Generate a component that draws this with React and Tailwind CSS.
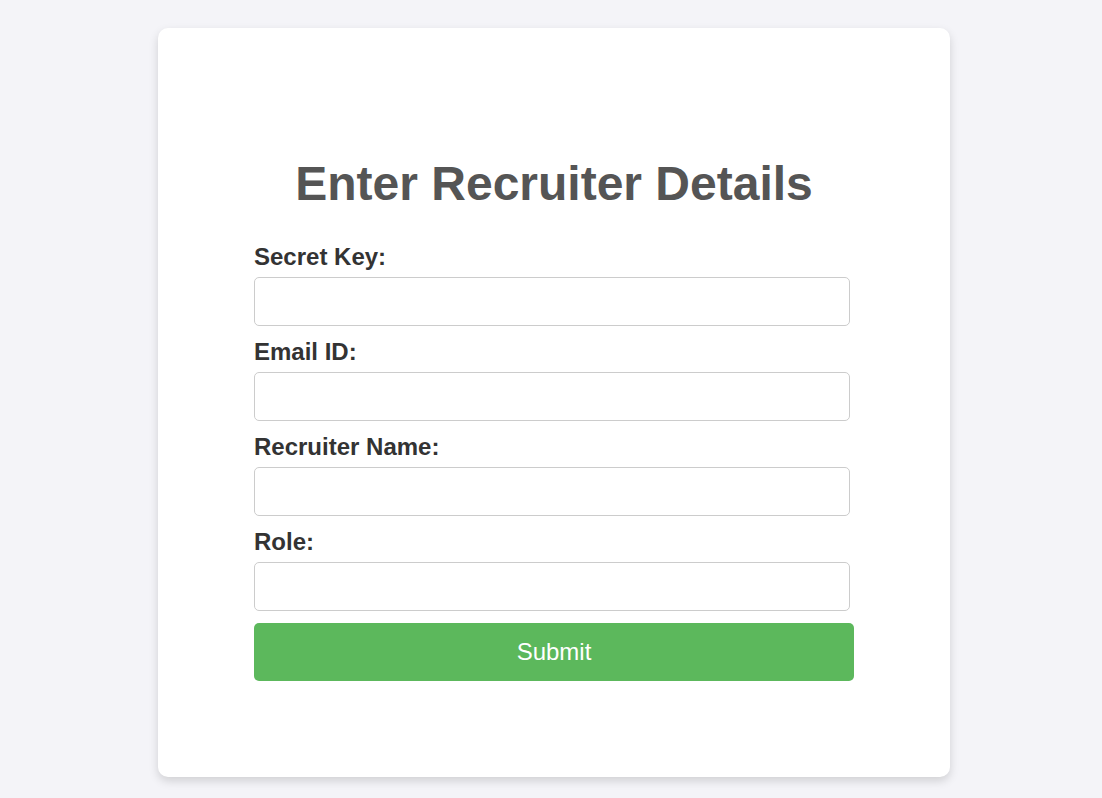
import React from 'react';

const FIELDS = ['Secret Key:', 'Email ID:', 'Recruiter Name:', 'Role:'];

const App = () => {
  return (
    <div
      className="min-h-screen bg-[#f4f4f8] pt-[28px] pb-[22px]"
      style={{ fontFamily: '"Liberation Sans", Arial, sans-serif' }}
    >
      <div className="ml-[158px] w-[792px] rounded-[10px] bg-white p-[96px] shadow-[0_4px_10px_rgba(0,0,0,0.15)]">
        <h1 className="my-[32px] text-center text-[48px] font-bold leading-[55px] text-[#555555]">
          Enter Recruiter Details
        </h1>
        <form className="flex w-[600px] flex-col" onSubmit={(e) => e.preventDefault()}>
          {FIELDS.map((label) => (
            <div key={label} className="mb-[12px] flex flex-col">
              <label className="mb-[6px] text-[24px] font-bold leading-[28px] text-[#333333]">
                {label}
              </label>
              <input
                type="text"
                className="h-[49px] w-[596px] rounded-[5px] border border-[#cccccc] px-[10px] text-[20px] outline-none"
              />
            </div>
          ))}
          <button
            type="submit"
            className="h-[58px] w-[600px] rounded-[5px] bg-[#5cb85c] text-[24px] text-white"
          >
            Submit
          </button>
        </form>
      </div>
    </div>
  );
};

export default App;
